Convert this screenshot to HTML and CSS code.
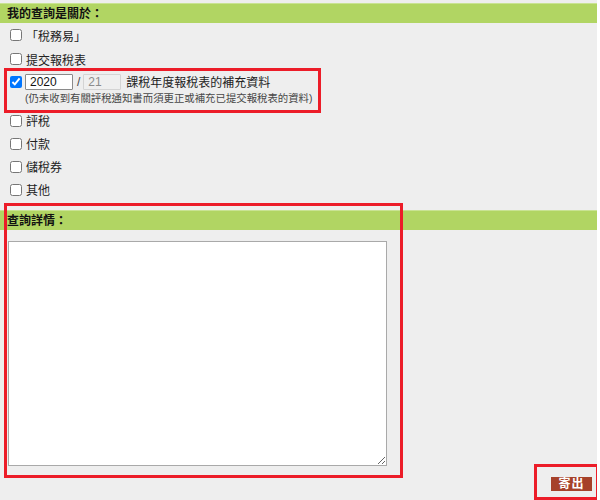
FILE: index.html
```html
<!DOCTYPE html>
<html lang="zh-Hant">
<head>
<meta charset="utf-8">
<title>查詢</title>
<link rel="stylesheet" href="styles.css">
</head>
<body>
<div class="page">
  <div class="bar bar-top">我的查詢是關於：</div>
  <ul class="options">
    <li class="opt"><input type="checkbox" class="cb"><span>「稅務易」</span></li>
    <li class="opt"><input type="checkbox" class="cb"><span>提交報稅表</span></li>
    <li class="opt supp">
      <div class="supp-line">
        <input type="checkbox" class="cb" checked>
        <input type="text" class="yr" value="2020">
        <span class="slash">/</span>
        <input type="text" class="yr yr2" value="21" disabled>
        <span class="supp-label">課稅年度報稅表的補充資料</span>
      </div>
      <div class="note">(仍未收到有關評稅通知書而須更正或補充已提交報稅表的資料)</div>
    </li>
    <li class="opt"><input type="checkbox" class="cb"><span>評稅</span></li>
    <li class="opt"><input type="checkbox" class="cb"><span>付款</span></li>
    <li class="opt"><input type="checkbox" class="cb"><span>儲稅券</span></li>
    <li class="opt"><input type="checkbox" class="cb"><span>其他</span></li>
  </ul>
  <div class="bar bar-detail">查詢詳情：</div>
  <div class="detail"><textarea class="msg"></textarea></div>
  <div class="actions"><button class="send">寄出</button></div>

  <div class="mark mark-1"></div>
  <div class="mark mark-2"></div>
  <div class="mark mark-3"></div>
</div>
</body>
</html>
```

FILE: styles.css
```css
html, body {
  margin: 0;
  padding: 0;
  background: #ffffff;
}
body {
  font-family: "Liberation Sans", "Noto Sans CJK TC", sans-serif;
  font-size: 12px;
  color: #222;
}
.page {
  position: relative;
  width: 597px;
  height: 500px;
  background: #eeeeee;
  padding-top: 3px;
  box-sizing: border-box;
  overflow: hidden;
}
.bar {
  background: #b1d563;
  height: 20px;
  line-height: 20px;
  font-weight: bold;
  font-size: 12px;
  color: #111;
  padding-left: 7px;
  border-top: 1px solid #c9e393;
  box-sizing: border-box;
}
.bar-detail {
  margin-top: 9px;
}
.options {
  list-style: none;
  margin: 0;
  padding: 0;
}
.opt {
  display: flex;
  align-items: center;
  height: 24px;
}
.opt:nth-child(n+4) {
  height: 23px;
}
.cb {
  width: 12px;
  height: 12px;
  margin: 0 4px 0 10px;
  flex: none;
}
.supp {
  display: block;
  height: auto;
  padding-bottom: 4px;
}
.supp-line {
  display: flex;
  align-items: center;
  height: 21px;
}
.supp-line .cb {
  margin-right: 3px;
}
.yr {
  width: 48px;
  height: 16px;
  box-sizing: border-box;
  border: 1px solid #8a8a8a;
  border-radius: 1px;
  background: #fff;
  font-family: "Liberation Sans", sans-serif;
  font-size: 12px;
  padding: 0 0 0 4px;
  margin: 0;
  color: #111;
}
.yr2 {
  width: 38px;
  background: #efefef;
  border-color: #d4d4d4;
  color: #8c8c8c;
}
.slash {
  margin: 0 3px 0 4px;
  color: #444;
}
.supp-label {
  margin-left: 5px;
}
.note {
  height: 13px;
  line-height: 13px;
  font-size: 10.4px;
  color: #484848;
  padding-left: 25px;
}
.detail {
  padding: 11px 0 0 8px;
}
.msg {
  display: block;
  width: 379px;
  height: 225px;
  box-sizing: border-box;
  margin: 0;
  border: 1px solid #a9a9a9;
  background: #fff;
  resize: both;
}
.actions {
  display: flex;
  justify-content: flex-end;
  padding: 11px 5px 0 0;
}
.send {
  width: 41px;
  height: 14px;
  padding: 0;
  border: none;
  background: #a6412a;
  color: #fff;
  font-family: "Liberation Sans", "Noto Sans CJK TC", sans-serif;
  font-size: 12px;
  font-weight: bold;
  line-height: 14px;
  letter-spacing: 1px;
}
.mark {
  position: absolute;
  border: 3px solid #ec1c28;
  box-sizing: border-box;
  pointer-events: none;
}
.mark-1 {
  left: 4px;
  top: 68px;
  width: 317px;
  height: 45px;
}
.mark-2 {
  left: 4px;
  top: 203px;
  width: 399px;
  height: 275px;
}
.mark-3 {
  left: 534px;
  top: 464px;
  width: 66px;
  height: 36px;
  border-right-width: 4px;
}
```
